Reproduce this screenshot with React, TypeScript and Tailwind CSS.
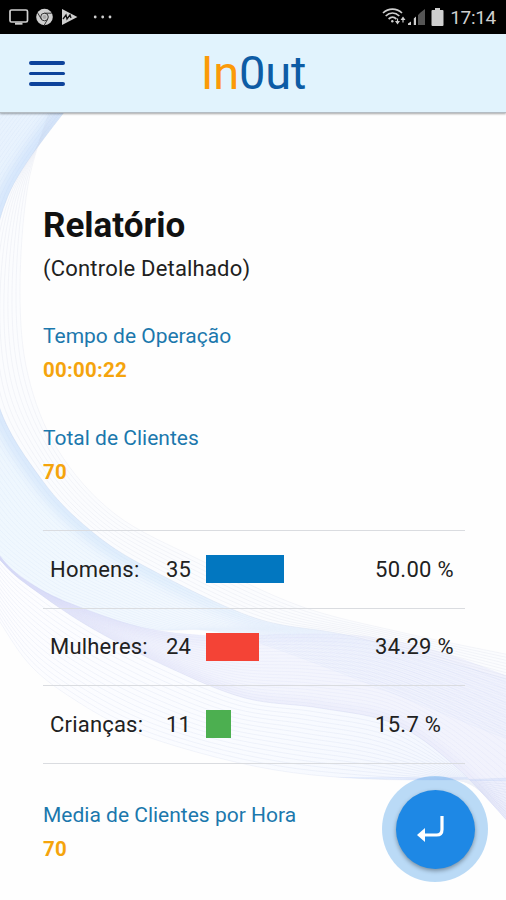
type Point = [number, number];

const OUTER: Point[] = [[52, 104], [28, 185], [20, 290], [28, 375], [58, 450], [115, 514], [200, 560], [300, 606], [400, 632], [510, 655]];
const BLUE: Point[] = [[70, 104], [8, 196], [-12, 300], [-2, 403], [42, 480], [90, 530], [148, 568], [255, 618], [355, 637], [510, 680]];
const PALE: Point[] = [[-20, 104], [-75, 190], [-105, 300], [-90, 430], [-30, 530], [35, 586], [85, 609], [150, 629], [250, 640], [510, 740]];
const VIOLET: Point[] = [[-30, 500], [0, 556], [35, 586], [85, 609], [150, 629], [220, 636], [300, 634], [370, 637], [440, 652], [512, 678]];
const FOLD: Point[] = [[-30, 510], [2, 562], [40, 594], [95, 630], [170, 668], [245, 698], [320, 708], [395, 724], [455, 766], [512, 826]];
const BOTTOM: Point[] = [[-30, 570], [0, 622], [32, 667], [75, 700], [130, 730], [200, 753], [275, 770], [350, 778], [430, 780], [512, 778]];

function curve(points: Point[]): string {
  let d = `M${points[0][0]} ${points[0][1]}`;
  for (let i = 0; i < points.length - 1; i++) {
    const a = points[Math.max(0, i - 1)];
    const b = points[i];
    const c = points[i + 1];
    const e = points[Math.min(points.length - 1, i + 2)];
    d += `C${b[0] + (c[0] - a[0]) / 6} ${b[1] + (c[1] - a[1]) / 6} ${c[0] - (e[0] - b[0]) / 6} ${c[1] - (e[1] - b[1]) / 6} ${c[0]} ${c[1]}`;
  }
  return d;
}

function band(a: Point[], b: Point[]): string {
  return `${curve(a)}L${curve([...b].reverse()).slice(1)}Z`;
}

function Threads({ from, to, count, color, opacity }: { from: Point[]; to: Point[]; count: number; color: string; opacity: number }) {
  return (
    <g fill="none" stroke={color} strokeWidth="0.7" opacity={opacity}>
      {Array.from({ length: count }, (_, k) => {
        const t = k / (count - 1);
        const pts = from.map((p, i): Point => [p[0] + (to[i][0] - p[0]) * t, p[1] + (to[i][1] - p[1]) * t]);
        return <path key={k} d={curve(pts)} />;
      })}
    </g>
  );
}

function Waves() {
  return (
    <svg className="absolute inset-0" width="506" height="900" viewBox="0 0 506 900" aria-hidden="true">
      <defs>
        <linearGradient id="sky" x1="0" y1="110" x2="420" y2="680" gradientUnits="userSpaceOnUse">
          <stop offset="0" stopColor="#e2effd" />
          <stop offset="0.5" stopColor="#ecf6fe" />
          <stop offset="1" stopColor="#f3f7fe" />
        </linearGradient>
        <linearGradient id="lilac" x1="0" y1="560" x2="506" y2="790" gradientUnits="userSpaceOnUse">
          <stop offset="0" stopColor="#ebecfc" />
          <stop offset="0.5" stopColor="#f1f3fd" />
          <stop offset="1" stopColor="#eeeffc" />
        </linearGradient>
        <linearGradient id="mist" x1="0" y1="600" x2="506" y2="790" gradientUnits="userSpaceOnUse">
          <stop offset="0" stopColor="#fdfdff" />
          <stop offset="0.55" stopColor="#f9fbff" />
          <stop offset="1" stopColor="#f1f5fe" />
        </linearGradient>
        <linearGradient id="edge" x1="0" y1="400" x2="380" y2="640" gradientUnits="userSpaceOnUse">
          <stop offset="0" stopColor="#c3dafa" />
          <stop offset="0.5" stopColor="#cfe5fb" />
          <stop offset="1" stopColor="#dfeafd" stopOpacity="0" />
        </linearGradient>
        <linearGradient id="lilacEdge" x1="0" y1="560" x2="360" y2="640" gradientUnits="userSpaceOnUse">
          <stop offset="0" stopColor="#cccff6" />
          <stop offset="1" stopColor="#dfe2fa" stopOpacity="0" />
        </linearGradient>
        <filter id="soft" x="-10%" y="-10%" width="120%" height="120%">
          <feGaussianBlur stdDeviation="5" />
        </filter>
        <clipPath id="skyClip"><path d={band(BLUE, PALE)} /></clipPath>
        <clipPath id="lilacClip"><path d={band(VIOLET, FOLD)} /></clipPath>
        <clipPath id="bottomClip"><path d={band(FOLD, BOTTOM)} /></clipPath>
      </defs>
      <path d={band(OUTER, BLUE)} fill="#fbfcfe" />
      <path d={band(FOLD, BOTTOM)} fill="url(#mist)" />
      <path d={band(BLUE, PALE)} fill="url(#sky)" opacity="0.8" />
      <path d={band(VIOLET, FOLD)} fill="url(#lilac)" opacity="0.8" />
      <g clipPath="url(#skyClip)">
        <path d={curve(BLUE)} fill="none" stroke="url(#edge)" strokeWidth="20" opacity="0.5" filter="url(#soft)" />
      </g>
      <g clipPath="url(#lilacClip)">
        <path d={curve(VIOLET)} fill="none" stroke="url(#lilacEdge)" strokeWidth="12" opacity="0.6" filter="url(#soft)" />
        <path d={curve(FOLD)} fill="none" stroke="#dadcf8" strokeWidth="8" opacity="0.4" filter="url(#soft)" />
      </g>
      <g clipPath="url(#bottomClip)">
        <path d="M300 778Q400 783 512 778" fill="none" stroke="#cddcfb" strokeWidth="8" opacity="0.7" filter="url(#soft)" />
      </g>
      <Threads from={OUTER} to={BLUE} count={9} color="#b9bfd6" opacity={0.2} />
      <Threads from={BLUE} to={PALE} count={24} color="#a9c2ec" opacity={0.14} />
      <Threads from={VIOLET} to={FOLD} count={22} color="#b5bbec" opacity={0.14} />
      <Threads from={FOLD} to={BOTTOM} count={16} color="#a8b6dc" opacity={0.19} />
    </svg>
  );
}

function StatusBar() {
  return (
    <div className="flex h-[34px] items-center justify-between bg-black pr-[10px] pl-[9px] text-[#cfcfcf]">
      <div className="flex items-center">
        <svg width="20" height="18" viewBox="0 0 20 18" fill="none" stroke="currentColor" strokeWidth="1.7">
          <rect x="1" y="2" width="17.5" height="12" rx="1.5" />
          <path d="M6 15.7h7.5" strokeWidth="2" />
        </svg>
        <svg className="ml-[7px]" width="17" height="18" viewBox="0 0 17 18">
          <circle cx="8.5" cy="9" r="8.3" fill="currentColor" />
          <g fill="none" stroke="#333" strokeWidth="1">
            <circle cx="8.5" cy="9" r="3.8" />
            <path d="M8.5 5.2h7.2M5.2 10.9 1.7 5M11.8 10.9l-3.5 6.2" />
          </g>
          <circle cx="8.5" cy="9" r="2" fill="#aaa" />
        </svg>
        <svg className="ml-[8px]" width="17" height="18" viewBox="0 0 17 18">
          <path d="M1 1 16.4 9 1 17Z" fill="currentColor" />
          <path d="m2 11 3-4 1 4 3-4 1 3" fill="none" stroke="#111" strokeWidth="1.3" />
        </svg>
        <svg className="ml-[15px]" width="20" height="4" viewBox="0 0 20 4" fill="currentColor">
          <circle cx="2.2" cy="2" r="1.4" />
          <circle cx="9.7" cy="2" r="1.4" />
          <circle cx="17" cy="2" r="1.4" />
        </svg>
      </div>
      <div className="flex items-center">
        <svg width="24" height="20" viewBox="0 0 24 20" fill="none" stroke="currentColor" strokeWidth="1.7">
          <path d="M1 6c5.5-5.2 13.5-5.2 19 0M3.7 9c4-4 9.6-4 13.6 0M6.6 12c2.4-2.2 5.4-2.2 7.8 0" />
          <circle cx="10.3" cy="14.3" r="1.2" fill="currentColor" stroke="none" />
          <path d="M15.5 11.5v3M21 12.500v3" strokeWidth="1.2" />
          <path d="m13 14 2.5 3.5L18 14ZM18.5 13l2.5-3.5 2.5 3.5Z" fill="currentColor" stroke="none" />
        </svg>
        <svg className="ml-[2px]" width="18" height="18" viewBox="0 0 18 18">
          <path d="M0 17v-1.500l3-2V17ZM5.800 17v-6.500L8 8.500V17Z" fill="currentColor" />
          <path d="M10 17V7l2.500-2.500V17ZM12.500 17V4.500L17 1v16Z" fill="#555" />
        </svg>
        <svg className="ml-[5px]" width="13" height="18" viewBox="0 0 13 18" fill="currentColor">
          <path d="M4 0h5v2h2.500q1 0 1 1v14q0 1-1 1h-10q-1 0-1-1V3q0-1 1-1H4Z" />
        </svg>
        <span className="ml-[6px] text-[19px] leading-none tracking-[-0.3px]">17:14</span>
      </div>
    </div>
  );
}

const rows = [
  { label: "Homens:", count: 35, percent: "50.00 %", bar: "w-[78px] bg-[#0277c0]" },
  { label: "Mulheres:", count: 24, percent: "34.29 %", bar: "w-[53px] bg-[#f44336]" },
  { label: "Crianças:", count: 11, percent: "15.7 %", bar: "w-[25px] bg-[#4caf50]" },
];

function Stat({ label, value }: { label: string; value: string }) {
  return (
    <div className="flex flex-col whitespace-nowrap">
      <span className="text-[21px] leading-[34px] text-[#1b78ad]">{label}</span>
      <span className="text-[20.5px] leading-[34px] font-bold tracking-[0.25px] text-[#f5a40c]">{value}</span>
    </div>
  );
}

export default function App() {
  return (
    <div className="relative flex h-[900px] w-[506px] flex-col overflow-hidden bg-[#fefefe] font-['Roboto',sans-serif] text-[#212121]">
      <Waves />
      <div className="relative">
        <StatusBar />
        <header className="grid h-[79px] grid-cols-[1fr_auto_1fr] items-center border-b border-[#b4bcc3] bg-[#e1f3fd] shadow-[0_1px_2px_rgba(0,0,0,0.35)]">
          <button aria-label="Menu" className="mt-px ml-[29px] flex w-[36px] flex-col gap-[7px]">
            <span className="h-[3.5px] rounded-full bg-[#0d439b]" />
            <span className="h-[3.5px] rounded-full bg-[#0d439b]" />
            <span className="h-[3.5px] rounded-full bg-[#0d439b]" />
          </button>
          <div className="mb-[2px] pl-px text-[47px] leading-none tracking-[-0.2px] text-[#0d5ca5]">
            <span className="text-[#fb9a08]">In</span>0ut
          </div>
        </header>
      </div>
      <main className="relative flex flex-col px-[43px] pt-[93px]">
        <h1 className="text-[35px] leading-[40px] font-bold text-[#111]">Relatório</h1>
        <p className="mt-[6px] text-[22px] leading-[34px] tracking-[0.2px]">(Controle Detalhado)</p>
        <div className="mt-[33px] flex flex-col gap-[34px]">
          <Stat label="Tempo de Operação" value="00:00:22" />
          <Stat label="Total de Clientes" value="70" />
        </div>
        <div className="mt-[41px] w-[422px] border-t border-[#dadce0]">
          {rows.map((r) => (
            <div key={r.label} className="flex h-[77.5px] items-center border-b border-[#dadce0] pl-[7px] text-[22px] tracking-[0.2px]">
              <span className="w-[116px]">{r.label}</span>
              <span className="w-[40px]">{r.count}</span>
              <span className="flex w-[169px]">
                <span className={`h-[28px] ${r.bar}`} />
              </span>
              <span className="tracking-[0.3px] whitespace-nowrap">{r.percent}</span>
            </div>
          ))}
        </div>
        <div className="mt-[34px]">
          <Stat label="Media de Clientes por Hora" value="70" />
        </div>
      </main>
      <button aria-label="Voltar" className="absolute top-[776px] left-[382px] flex size-[106px] items-center justify-center rounded-full bg-[#1e88e5]/30">
        <span className="flex size-[79px] items-center justify-center rounded-full bg-[#1e88e5] shadow-[0_2px_4px_rgba(0,0,0,0.35)]">
          <svg className="-ml-[9px]" width="28" height="28" viewBox="0 0 28 28">
            <path d="M25 1v13.500q0 5.500-5.500 5.500H7" fill="none" stroke="#fff" strokeWidth="3.2" />
            <path d="M0 20 8 13v14Z" fill="#fff" />
          </svg>
        </span>
      </button>
    </div>
  );
}
